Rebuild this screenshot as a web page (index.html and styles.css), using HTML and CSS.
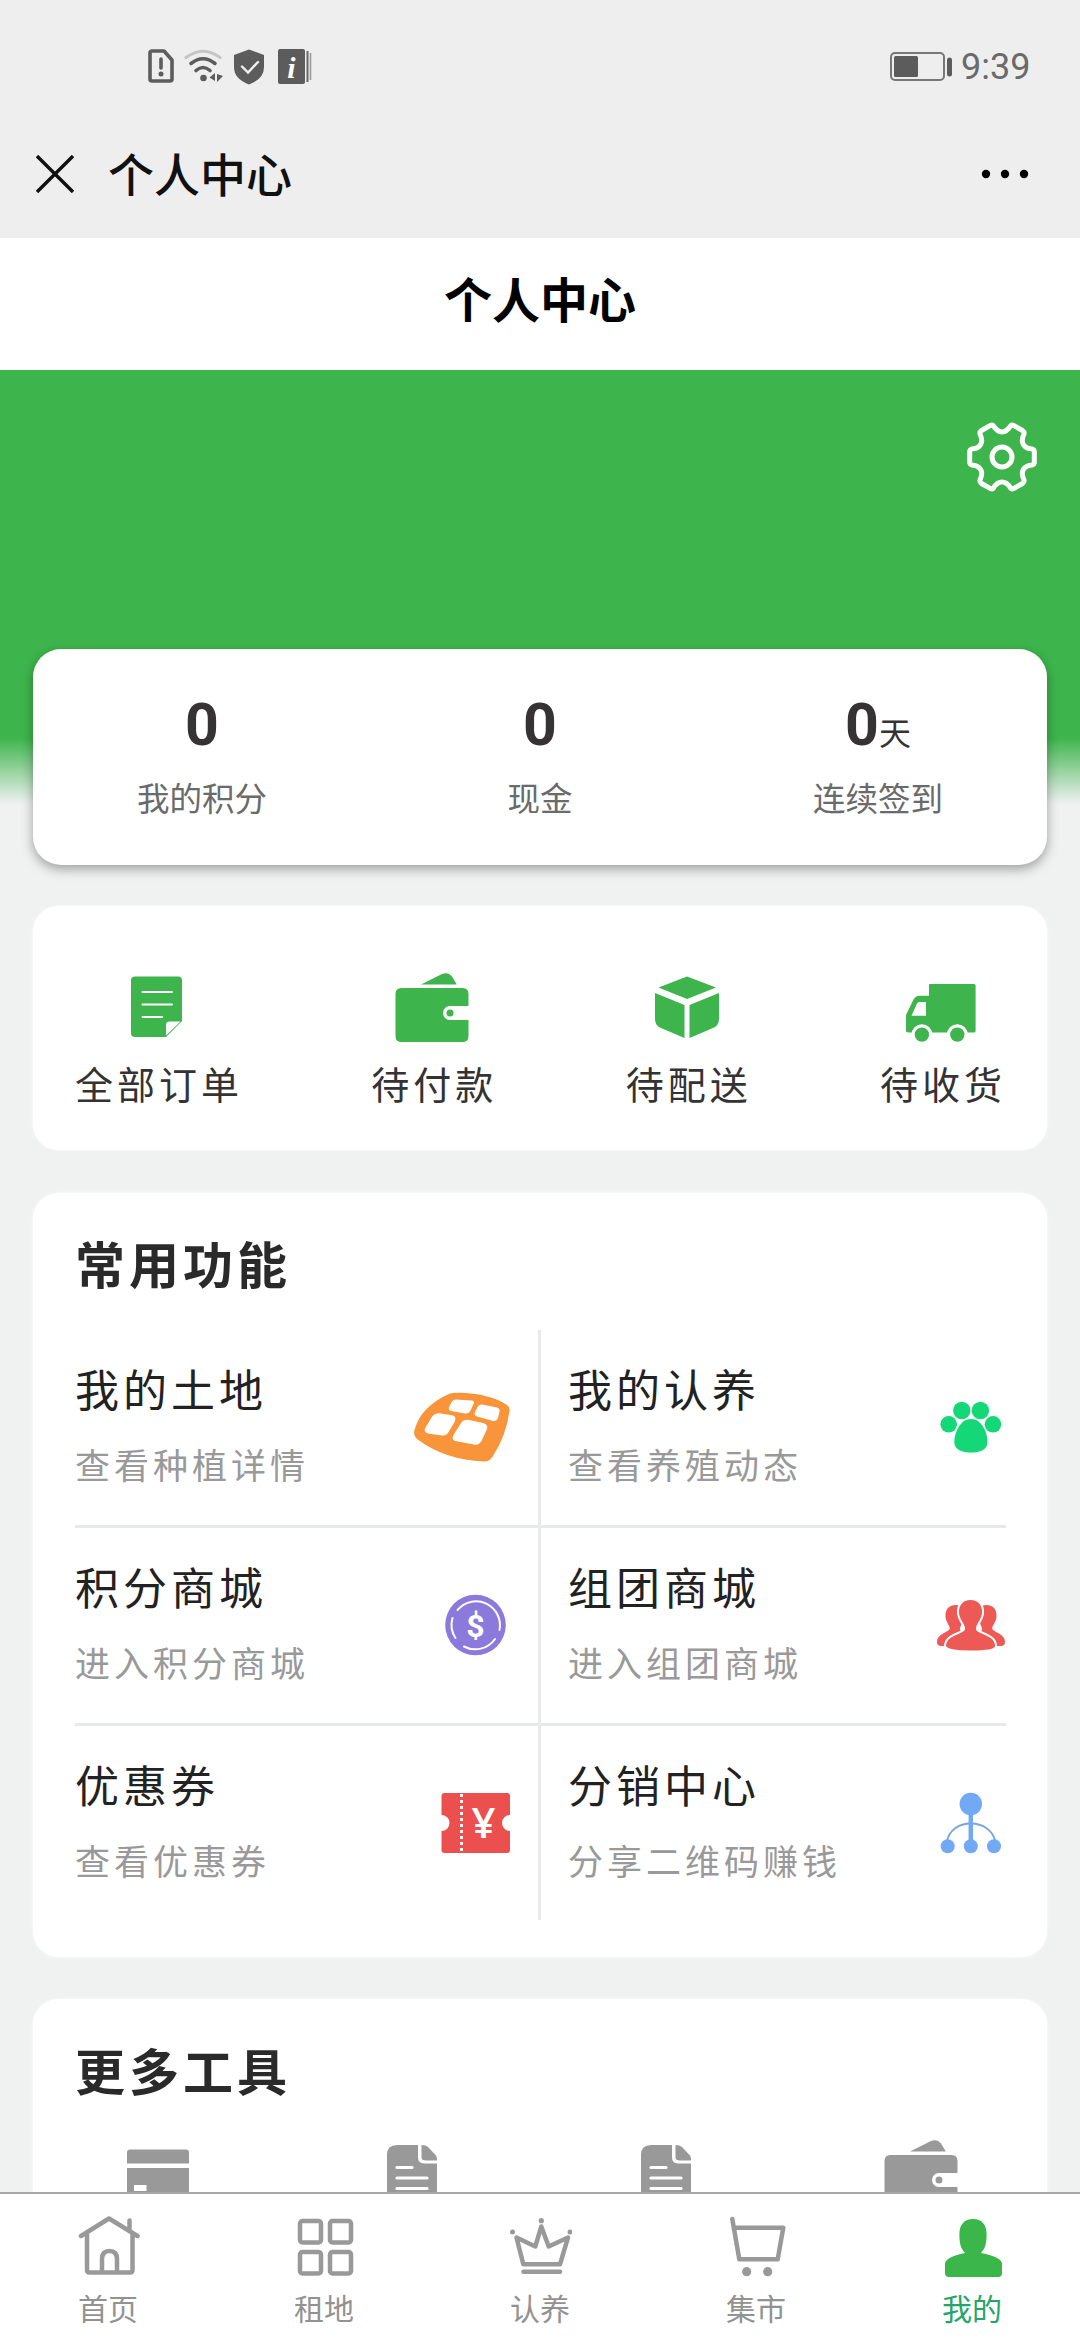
FILE: index.html
```html
<!DOCTYPE html>
<html lang="zh-CN">
<head>
<meta charset="utf-8">
<title>个人中心</title>
<link rel="stylesheet" href="styles.css">
</head>
<body>
<svg class="defs" width="0" height="0">
  <defs>
    <symbol id="wallet" viewBox="0 0 80 80">
      <path d="M29 17.6 49.5 7.2Q56 4.300 60 9.500L64.800 17.600Z"/>
      <path d="M9.500 21H70.500Q76.500 21 76.500 27V39H58A7 7 0 0 0 58 53H76.500V69Q76.500 75 70.500 75H9.500Q3.500 75 3.500 69V27Q3.500 21 9.500 21Z"/>
      <circle cx="58" cy="46" r="3.500"/>
    </symbol>
    <symbol id="sheet" viewBox="0 0 80 80">
      <path d="M25 11H46V23Q46 29.500 52 29.500H65V75H15V21Q15 11 25 11Z"/>
      <path d="M49.500 11Q54 11 56 13L64 21.500Q65 23 65 26.500H54Q49.500 26.500 49.500 23Z"/>
      <path d="M25 33.500H40M25 44H55M25 54.500H55" stroke="#fff" stroke-width="3.200" stroke-linecap="round"/>
    </symbol>
  </defs>
</svg>

<header class="system">
  <div class="status">
    <div class="status-icons">
      <svg width="26" height="34" viewBox="0 0 26 34"><path d="M4 2H16L24 11V30Q24 32 22 32H4Q2 32 2 30V4Q2 2 4 2Z" fill="none" stroke="#5c5c5c" stroke-width="3.600" stroke-linejoin="round"/><path d="M13 10V19" stroke="#5c5c5c" stroke-width="3.600" stroke-linecap="round"/><circle cx="13" cy="25" r="2.500" fill="#5c5c5c"/></svg>
      <svg class="wifi" width="40" height="34" viewBox="0 0 40 34" fill="none" stroke-linecap="round"><path d="M2 8.500Q19 -4 36 8.500" stroke="#c4c4c4" stroke-width="3"/><path d="M7 14.500Q19 5 31 14.500" stroke="#5c5c5c" stroke-width="3.600"/><path d="M12 21.500Q19 15.500 26 21.500" stroke="#5c5c5c" stroke-width="3.600"/><circle cx="19.500" cy="29" r="3.300" fill="#5c5c5c"/><path d="M31 24V32L25.500 28.500ZM33 25V33L39 27Z" fill="#5c5c5c"/></svg>
      <svg class="shield" width="32" height="36" viewBox="0 0 32 36"><path d="M16 .5 31 6V18Q31 30 16 35.500Q1 30 1 18V6Z" fill="#5c5c5c"/><path d="M9 17.500 15 23.500 25 13" fill="none" stroke="#f2f2f2" stroke-width="2.400" stroke-linecap="round"/></svg>
      <svg class="info" width="34" height="36" viewBox="0 0 34 36"><rect width="27" height="35" rx="2" fill="#5c5c5c"/><path d="M29.500 2V33" stroke="#666" stroke-width="2"/><path d="M32.500 4V31" stroke="#999" stroke-width="1.600"/><text x="13.500" y="28.500" class="info-mark">i</text></svg>
    </div>
    <div class="status-right">
      <svg width="63" height="30" viewBox="0 0 63 30"><rect x="1" y="1" width="53" height="27" rx="4" fill="none" stroke="#777" stroke-width="2"/><rect x="4" y="4" width="24" height="21" rx="1.500" fill="#5c5c5c"/><rect x="57" y="5.500" width="5" height="19" rx="2.500" fill="#5c5c5c"/></svg>
      <span class="clock">9:39</span>
    </div>
  </div>
  <div class="nav">
    <svg width="38" height="38" viewBox="0 0 38 38"><path d="M1 1 37 37M37 1 1 37" stroke="#111" stroke-width="3.400"/></svg>
    <span class="nav-title">个人中心</span>
    <svg width="48" height="10" viewBox="0 0 48 10"><circle cx="5" cy="5" r="4.200"/><circle cx="24" cy="5" r="4.200"/><circle cx="43" cy="5" r="4.200"/></svg>
  </div>
</header>

<h1 class="page-title">个人中心</h1>

<main class="content">
  <div class="hero">
    <svg width="72" height="72" viewBox="-36 -36 72 72" fill="none" stroke="#fff" stroke-width="5" stroke-linejoin="round"><path d="M-8.800-31.300C-3.500-23 3.500-23 8.800-31.300Q10-32.300 11.500-31.600L20.500-26.500Q22.500-25 22-23C18-14.600 21.400-8.500 30.500-7.900Q32-7.500 32.300-6V6Q32 7.500 30.500 7.900C21.400 8.500 18 14.600 22 23Q22.500 25 20.500 26.500L11.500 31.600Q10 32.300 8.800 31.300C3.500 23-3.500 23-8.800 31.300Q-10 32.300-11.500 31.600L-20.500 26.500Q-22.500 25-22 23C-18 14.600-21.400 8.500-30.500 7.900Q-32 7.500-32.300 6V-6Q-32-7.500-30.500-7.900C-21.400-8.500-18-14.600-22-23Q-22.500-25-20.500-26.500L-11.500-31.600Q-10-32.300-8.800-31.300Z"/><circle r="10"/></svg>
  </div>

  <section class="card stats">
    <div class="stat"><div class="stat-value">0</div><div class="stat-label">我的积分</div></div>
    <div class="stat"><div class="stat-value">0</div><div class="stat-label">现金</div></div>
    <div class="stat"><div class="stat-value">0<small>天</small></div><div class="stat-label">连续签到</div></div>
  </section>

  <section class="card orders">
    <div class="order">
      <svg viewBox="0 0 80 80"><path d="M18 9.500H61Q65 9.500 65 13.500V54L49 70H18Q14 70 14 66V13.500Q14 9.500 18 9.500Z"/><path d="M49 68.500V58Q49 54.500 52.500 54.500H63.500Z" fill="#fff"/><path d="M25.500 25H55M25.500 37.500H55M25.500 50H45" stroke="#fff" stroke-width="2" stroke-linecap="round"/></svg>
      <span>全部订单</span>
    </div>
    <div class="order"><svg><use href="#wallet"/></svg><span>待付款</span></div>
    <div class="order">
      <svg viewBox="0 0 80 80"><path d="M40 9.500 69 20.500 40 32 11.500 20.500Z"/><path d="M8 26 37.500 38V71L14 61Q8 58.500 8 52Z"/><path d="M72 26 42.500 38V71L66 61Q72 58.500 72 52Z"/></svg>
      <span>待配送</span>
    </div>
    <div class="order">
      <svg viewBox="0 0 80 80"><path d="M29 17H73Q74.600 17 74.600 18.500V64Q74.600 65.500 73 65.500H7Q5 65.500 5 63.500V48L12.500 32.500Q14.500 28.700 18.500 28.700H28V18Q28 17 29 17Z"/><path d="M18 35H25V48.700H10.500L15.500 37.500Q16.500 35 18 35Z" fill="#fff"/><g stroke="#fff" stroke-width="3.200"><circle cx="20.900" cy="67.600" r="8.800"/><circle cx="56.300" cy="67.600" r="8.800"/></g></svg>
      <span>待收货</span>
    </div>
  </section>

  <section class="card features">
    <h2>常用功能</h2>
    <div class="grid">
      <div class="cell">
        <div><h3>我的土地</h3><p>查看种植详情</p></div>
        <svg class="wide" viewBox="0 0 96 70"><path d="M36 1.500Q40 .3 48 .8Q76 2 93 13Q96 15 95.500 19Q92 44 79 64Q76 69.500 70 69.500Q31 68 3 47Q-1 44 .5 38Q7 14 36 1.500Z" fill="#f8953a"/><g fill="#fff"><path d="M42 7.500 58 8.500Q61 9 59.500 12L56 19.500Q54.500 22 51 21.500L37 19Q33.500 18 35.500 14L38 9.500Q39.500 7.500 42 7.500Z"/><path d="M68 12.500 83 15.500Q86 16.500 85.500 19.500L84 26Q82.500 29.500 79 29L63 24.500Q59.500 23 61 20L63.500 15Q65 12 68 12.500Z"/><path d="M27 21.500 39 23.500Q43 25 40.500 30L34 41Q32 44 28 43.500L14 41.500Q9 40 11.500 35.500L17.500 25.500Q21 20.500 27 21.500Z"/><path d="M55 28 69 31Q74.500 32.500 73 37L67.500 49Q65 53.500 60 52.500L41 49Q37 47.500 39.500 43L47 31Q50 27 55 28Z"/></g></svg>
      </div>
      <div class="cell">
        <div><h3>我的认养</h3><p>查看养殖动态</p></div>
        <svg viewBox="0 0 70 70" fill="#14d877"><circle cx="12.700" cy="32.300" r="8.300"/><circle cx="25.800" cy="18.500" r="8.700"/><circle cx="44.400" cy="18.500" r="8.700"/><circle cx="57" cy="32.300" r="8.300"/><path d="M35 27C46 27 51.500 41 51.500 50C51.500 58 44 60.500 35 60.500S18.300 58 18.300 50C18.300 41 24 27 35 27Z"/></svg>
      </div>
      <div class="cell">
        <div><h3>积分商城</h3><p>进入积分商城</p></div>
        <svg viewBox="0 0 70 70"><circle cx="35.500" cy="35" r="30.300" fill="#8c79dc"/><g fill="none" stroke="#fff" stroke-width="2" stroke-linecap="round"><path d="M17.500 20A24 24 0 0 1 59.500 40"/><path d="M12.500 28A24 24 0 0 0 15.500 48"/><path d="M24 56.500A24 24 0 0 0 55 49"/></g><text x="35.500" y="46.500" class="dollar">$</text></svg>
      </div>
      <div class="cell">
        <div><h3>组团商城</h3><p>进入组团商城</p></div>
        <svg viewBox="0 0 70 70" fill="#ed5a56"><path d="M20 15C26 15 29 20 28 27C27 33 24 36 24 39L27 52 18 56H5Q1 56 1 52C1 45 9 43 13 40C16 38 10 33 9.500 27C9 19 13 15 20 15Z"/><path d="M50 15C44 15 41 20 42 27C43 33 46 36 46 39L43 52 52 56H65Q69 56 69 52C69 45 61 43 57 40C54 38 60 33 60.500 27C61 19 57 15 50 15Z"/><path d="M34.500 9C43 9 47.500 15 47 23C46.500 31 40 35 41 39.500C42 43 60 44 60 56Q60 61.500 35 61.500T9 56C9 44 27 43 28 39.500C29 35 22.500 31 22 23C21.500 15 26 9 34.500 9Z" stroke="#fff" stroke-width="2"/></svg>
      </div>
      <div class="cell">
        <div><h3>优惠券</h3><p>查看优惠券</p></div>
        <svg viewBox="0 0 70 70"><path d="M4.500 5H67Q70 5 70 8V27A8 8 0 0 0 70 43V62Q70 65 67 65H4.500Q1.500 65 1.500 62V43A8 8 0 0 0 1.500 27V8Q1.500 5 4.500 5Z" fill="#eb504f"/><path d="M21.500 6V64" stroke="#fff" stroke-width="3" stroke-dasharray="3 3"/><text x="43.500" y="50" class="yen">¥</text></svg>
      </div>
      <div class="cell">
        <div><h3>分销中心</h3><p>分享二维码赚钱</p></div>
        <svg viewBox="0 0 70 70" fill="#72a9f5"><path d="M10.700 54C13 42 23 35.500 34.800 35.500S57 42 59.500 54" fill="none" stroke="#76a5dc" stroke-width="1.800"/><path d="M34.800 16V58" stroke="#72a9f5" stroke-width="4.500"/><circle cx="34.800" cy="16" r="11.200"/><circle cx="11.700" cy="58.300" r="7"/><circle cx="34.800" cy="58.300" r="7"/><circle cx="58" cy="58.300" r="7"/></svg>
      </div>
    </div>
  </section>

  <section class="card tools">
    <h2>更多工具</h2>
    <div class="tool-row">
      <svg viewBox="0 0 80 80"><path d="M13 15.500H69Q72 15.500 72 18.500V29.500H10V18.500Q10 15.500 13 15.500Z"/><path d="M10 34H72V75H10Z"/><path d="M17 51H29.500V57H17Z" fill="#fff"/></svg>
      <svg><use href="#sheet"/></svg>
      <svg><use href="#sheet"/></svg>
      <svg><use href="#wallet"/></svg>
    </div>
  </section>
</main>

<nav class="tabs">
  <div class="tab"><svg viewBox="0 0 64 64"><path d="M5 22 33 4.500 61.500 22M11 20V56Q11 58.500 13.500 58.500H54Q56.500 58.500 56.500 56V20M53.500 16V6.500M26 58V45Q26 37 33.500 37T41 45V58"/></svg><span>首页</span></div>
  <div class="tab"><svg viewBox="0 0 64 64"><rect x="8" y="7" width="21" height="21.500" rx="2.500"/><rect x="38" y="7" width="21" height="21.500" rx="2.500"/><rect x="8" y="38" width="21" height="21.500" rx="2.500"/><rect x="38" y="38" width="21" height="21.500" rx="2.500"/></svg><span>租地</span></div>
  <div class="tab"><svg viewBox="0 0 64 64"><path d="M8.500 23.500 27.300 32.500 33.300 12.500 40.700 32.500 60 23.500 52 50.300H15.300ZM15.500 57.700H52"/><g fill="#999" stroke="none"><circle cx="33.300" cy="6.700" r="2.600"/><circle cx="4.500" cy="18" r="2.500"/><circle cx="62" cy="18" r="2.500"/></g></svg><span>认养</span></div>
  <div class="tab"><svg viewBox="0 0 64 64"><path d="M8.300 5 15.300 45.300H53.700L59.300 13.700H10.300"/><g fill="#999" stroke="none"><circle cx="22.700" cy="57.700" r="4.600"/><circle cx="43.700" cy="57.700" r="4.600"/></g></svg><span>集市</span></div>
  <div class="tab active"><svg viewBox="0 0 64 64"><path d="M33 5C42 5 46.600 11 46.600 20C46.600 29 45.500 34 41 39Q62 43 62 50V59Q62 63 58 63H9Q5 63 5 59V50Q5 43 25 39C20.500 34 19.400 29 19.400 20C19.400 11 24 5 33 5Z"/></svg><span>我的</span></div>
</nav>
</body>
</html>
```
FILE: styles.css
```css
* { box-sizing: border-box; }

html, body { margin: 0; padding: 0; }

body {
  width: 1080px;
  height: 2340px;
  overflow: hidden;
  display: flex;
  flex-direction: column;
  background: #f0f1f1;
  color: #222;
  font-family: "Noto Sans CJK SC", "Noto Sans", sans-serif;
}

svg { display: block; flex: none; }
.defs { position: absolute; }
h1, h2, h3, p { margin: 0; }

/* System status and browser bar */
.system { flex: none; height: 238px; background: #eee; }

.status {
  height: 110px;
  padding: 49px 51px 0 148px;
  display: flex;
  justify-content: space-between;
  align-items: flex-start;
}
.status-icons { display: flex; }
.wifi { margin-left: 10px; }
.shield { margin-left: 9px; }
.info { margin-left: 13px; }
.info-mark {
  fill: #fff;
  font: italic bold 30px "Liberation Serif", serif;
  text-anchor: middle;
}
.status-right { display: flex; align-items: center; gap: 8px; padding-top: 3px; }
.clock { font: 36px/30px Roboto, sans-serif; color: #6a6a6a; width: 68px; }

.nav { height: 128px; padding: 0 51px 0 36px; display: flex; align-items: center; }
.nav-title {
  flex: 1;
  margin-left: 34px;
  padding-bottom: 5px;
  font-size: 46px;
  font-weight: 500;
  line-height: 60px;
  color: #111;
}

.page-title {
  flex: none;
  height: 132px;
  background: #fff;
  color: #000;
  font-size: 48px;
  font-weight: 700;
  line-height: 119px;
  text-align: center;
}

/* Scrolling content */
.content {
  flex: 1;
  min-height: 0;
  overflow: hidden;
  padding: 0 33px;
  background: linear-gradient(#3db54c 0, #3db54c 368px, #f0f1f1 434px);
}
.hero { height: 279px; padding: 51px 9px 0; display: flex; justify-content: flex-end; }

.card { background: #fff; border-radius: 26px; box-shadow: 0 0 3px #fff; }

.stats {
  height: 216px;
  padding-top: 46px;
  display: flex;
  border-radius: 28px;
  box-shadow: 0 4px 12px rgba(0, 0, 0, .35);
}
.stat { flex: 1; display: flex; flex-direction: column; align-items: center; }
.stat-value { font: bold 59px/60px Roboto, sans-serif; height: 60px; color: #353334; }
.stat-value small { font: 32px/32px "Noto Sans CJK SC", sans-serif; }
.stat-label { margin-top: 22px; font-size: 32.500px; line-height: 40px; color: #6a6a6a; }

.orders {
  height: 244px;
  margin-top: 41px;
  padding: 61px 41px 0 42px;
  display: flex;
  justify-content: space-between;
}
.order { display: flex; flex-direction: column; align-items: center; }
.order svg { width: 80px; height: 80px; margin-right: 4px; fill: #3db54c; }
.order span { margin-top: 12px; font-size: 38px; line-height: 48px; letter-spacing: 4px; color: #333; }

h2 { font-size: 50px; line-height: 70px; letter-spacing: 4px; font-weight: 700; color: #2a2a2a; }

.features { height: 764px; margin-top: 43px; padding: 34px 42px 0; }
.grid {
  margin-top: 33px;
  display: grid;
  grid-template-columns: 466px 465px;
  grid-template-rows: 198px 198px 194px;
}
.cell {
  padding-top: 28px;
  display: flex;
  justify-content: space-between;
  align-items: flex-start;
  border-bottom: 3px solid #e8e9e9;
}
.cell:nth-child(odd) { padding-right: 28px; border-right: 3px solid #e8e9e9; }
.cell:nth-child(even) { padding-left: 27px; }
.cell:nth-last-child(-n+2) { border-bottom: 0; }
.cell h3 { font-size: 44px; font-weight: 400; line-height: 60px; letter-spacing: 4px; color: #222; }
.cell p { margin-top: 22px; font-size: 35px; line-height: 48px; letter-spacing: 4px; color: #999; }
.cell svg { width: 70px; height: 70px; margin-top: 34px; }
.cell .wide { width: 96px; }
.dollar { fill: #fff; font: bold 32px Roboto, sans-serif; text-anchor: middle; }
.yen { fill: #fff; font: 600 42px "Open Sans", sans-serif; text-anchor: middle; }

.tools { height: 400px; margin-top: 42px; padding: 35px 42px 0; }
.tool-row { margin-top: 30px; padding: 0 44px 0 42px; display: flex; justify-content: space-between; }
.tool-row svg { width: 80px; height: 80px; fill: #999; }

/* Bottom tab bar */
.tabs { flex: none; height: 148px; display: flex; background: #fff; border-top: 2px solid #a8a8a8; }
.tab {
  flex: 1;
  padding-top: 20px;
  display: flex;
  flex-direction: column;
  align-items: center;
  color: #929292;
  font-size: 30px;
}
.tab svg {
  width: 64px;
  height: 64px;
  fill: none;
  stroke: #999;
  stroke-width: 4.500px;
  stroke-linecap: round;
  stroke-linejoin: round;
}
.tab span { margin-top: 9px; line-height: 40px; }
.tab.active { color: #25a56b; }
.tab.active svg { fill: #3bb64b; stroke: none; }
```
